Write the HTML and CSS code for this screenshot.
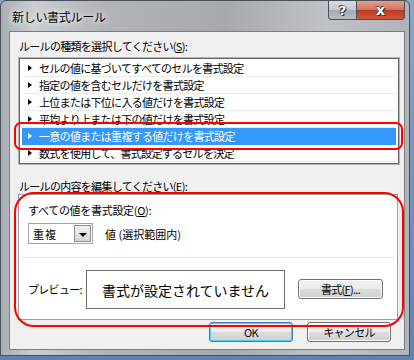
FILE: index.html
```html
<!DOCTYPE html>
<html lang="ja">
<head>
    <meta charset="UTF-8">
    <title>新しい書式ルール</title>
    <link rel="stylesheet" href="styles.css">
</head>
<body>
    <div class="window">
        <div class="titlebar">
            <span class="title">新しい書式ルール</span>
            <div class="caption-buttons">
                <div class="cap-btn help">?</div>
                <div class="cap-btn close">x</div>
            </div>
        </div>

        <div class="client">
            <div class="label">ルールの種類を選択してください(<u>S</u>):</div>
            <div class="listbox">
                <div class="row"><span class="tri"></span>セルの値に基づいてすべてのセルを書式設定</div>
                <div class="row"><span class="tri"></span>指定の値を含むセルだけを書式設定</div>
                <div class="row"><span class="tri"></span>上位または下位に入る値だけを書式設定</div>
                <div class="row"><span class="tri"></span>平均より上または下の値だけを書式設定</div>
                <div class="row selected"><span class="tri"></span>一意の値または重複する値だけを書式設定</div>
                <div class="row"><span class="tri"></span>数式を使用して、書式設定するセルを決定</div>
            </div>

            <div class="label second">ルールの内容を編集してください(<u>E</u>):</div>
            <div class="panel">
                <div class="panel-top">
                    <div class="sub-label">すべての値を書式設定(<u>O</u>):</div>
                    <div class="value-line">
                        <div class="combo">
                            <span class="combo-text">重複</span>
                            <span class="combo-arrow"><span class="down"></span></span>
                        </div>
                        <span class="value-text">値 (選択範囲内)</span>
                    </div>
                </div>
                <div class="preview-line">
                    <span class="preview-label">プレビュー:</span>
                    <div class="preview-box">書式が設定されていません</div>
                    <div class="btn format-btn">書式(<u>F</u>)...</div>
                </div>
            </div>

            <div class="footer">
                <div class="btn default">OK</div>
                <div class="btn">キャンセル</div>
            </div>
        </div>

        <!-- red annotation marks -->
        <div class="mark mark-row"></div>
        <div class="mark mark-panel"></div>
    </div>
</body>
</html>
```

FILE: styles.css
```css
body {
    margin: 0;
    padding: 0;
    background: linear-gradient(to bottom, #8aa6c8, #5e83b3);
    font-family: "Noto Sans CJK JP", "Noto Sans", sans-serif;
    font-size: 11px;
    letter-spacing: -0.7px;
    color: #000;
    width: 414px;
    height: 360px;
    overflow: hidden;
}
u {
    text-decoration: underline;
}
.window {
    position: relative;
    width: 410px;
    height: 356px;
    box-sizing: border-box;
    border: 1px solid #4a4f55;
    border-radius: 6px 6px 0 0;
    background: linear-gradient(to right, #a9aeb4 0%, #c9ccd0 8%, #b1b4b8 25%, #a6a9ad 55%, #bfc2c6 80%, #b0b4b9 100%);
    padding: 0 4px 5px 8px;
    display: flex;
    flex-direction: column;
}
.titlebar {
    height: 30px;
    display: flex;
    justify-content: space-between;
    align-items: flex-start;
    flex-shrink: 0;
}
.title {
    font-size: 12px;
    letter-spacing: -0.3px;
    margin-top: 7px;
    margin-left: 3px;
    color: #000;
    text-shadow: 0 0 8px #fff, 0 0 4px #fff;
}
.caption-buttons {
    display: flex;
}
.cap-btn {
    height: 19px;
    box-sizing: border-box;
    border: 1px solid #4b5058;
    border-top: none;
    display: flex;
    align-items: center;
    justify-content: center;
    font-family: "DejaVu Sans", sans-serif;
    font-weight: bold;
    letter-spacing: 0;
    color: #fff;
    text-shadow: 0 0 1px #222, 1px 1px 0 #333, -1px -1px 0 #555;
}
.help {
    width: 29px;
    border-radius: 0 0 0 4px;
    font-size: 13px;
    background: linear-gradient(to bottom, #d7dadf 0%, #c3c7cd 50%, #a5aab2 51%, #b9bec5 100%);
}
.close {
    width: 48px;
    border-left: none;
    border-radius: 0 0 4px 0;
    font-size: 14px;
    background: linear-gradient(to bottom, #e4a092 0%, #d0705c 50%, #bb3a20 51%, #d2553a 100%);
}
.client {
    flex: 1;
    background: #f0f0f0;
    border: 1px solid #7a7e83;
    display: flex;
    flex-direction: column;
    padding: 0 8px;
}
.label {
    height: 26px;
    line-height: 28px;
    padding-left: 1px;
}
.label.second {
    height: 30px;
    line-height: 44px;
}
.listbox {
    height: 102px;
    border: 1px solid #646464;
    box-shadow: 0 0 0 1px #b4b4b4;
    background: #fff;
    padding: 1px 2px;
    margin-left: 1px;
    width: 374px;
}
.row {
    height: 17px;
    line-height: 16px;
    border-bottom: 1px solid #ebebeb;
    box-sizing: border-box;
    display: flex;
    align-items: center;
    white-space: nowrap;
}
.row.selected {
    background: #3399ff;
    color: #fff;
    border-bottom-color: #3399ff;
}
.tri {
    width: 0;
    height: 0;
    border-top: 3px solid transparent;
    border-bottom: 3px solid transparent;
    border-left: 4px solid #000;
    margin: 0 7px 0 6px;
}
.selected .tri {
    border-left-color: #fff;
}
.panel {
    height: 126px;
    box-sizing: border-box;
    background: #fff;
    border: 1px solid #a0a0a0;
    width: 380px;
    display: flex;
    flex-direction: column;
    padding: 0 2px;
}
.panel-top {
    height: 62px;
    border-bottom: 1px solid #e3e3e3;
    padding-left: 7px;
}
.sub-label {
    margin-top: 7px;
    height: 16px;
    line-height: 16px;
    letter-spacing: -0.3px;
}
.value-line {
    display: flex;
    align-items: center;
    margin-top: 5px;
}
.combo {
    width: 65px;
    height: 21px;
    box-sizing: border-box;
    border: 1px solid #a5a5a5;
    display: flex;
    align-items: center;
    justify-content: space-between;
    padding: 1px;
}
.combo-text {
    padding-left: 3px;
    letter-spacing: 1px;
}
.combo-arrow {
    width: 17px;
    height: 17px;
    box-sizing: border-box;
    border: 1px solid #8e8f8f;
    background: linear-gradient(to bottom, #f2f2f2, #d5d5d5);
    display: flex;
    align-items: center;
    justify-content: center;
}
.down {
    width: 0;
    height: 0;
    border-left: 4px solid transparent;
    border-right: 4px solid transparent;
    border-top: 4px solid #000;
    margin-top: 2px;
}
.value-text {
    margin-left: 12px;
    letter-spacing: 0;
    white-space: pre;
}
.preview-line {
    flex: 1;
    display: flex;
    align-items: center;
    padding-left: 7px;
}
.preview-label {
    width: 58px;
    flex-shrink: 0;
    white-space: nowrap;
}
.preview-box {
    width: 199px;
    height: 39px;
    flex-shrink: 0;
    box-sizing: border-box;
    border: 1px solid #6d6d6d;
    display: flex;
    align-items: center;
    justify-content: center;
    font-size: 14px;
    letter-spacing: 0;
    margin-top: 2px;
}
.btn {
    width: 84px;
    height: 20px;
    flex-shrink: 0;
    box-sizing: border-box;
    border: 1px solid #707070;
    border-radius: 3px;
    background: linear-gradient(to bottom, #f2f2f2 0%, #ebebeb 50%, #dddddd 51%, #cfcfcf 100%);
    box-shadow: inset 0 0 0 1px #fcfcfc;
    display: flex;
    align-items: center;
    justify-content: center;
    line-height: 16px;
}
.format-btn {
    margin-left: 13px;
    width: 85px;
}
.footer {
    display: flex;
    justify-content: flex-end;
    gap: 14px;
    margin-top: 2px;
    padding-right: 5px;
}
.btn.default {
    border-color: #3c7fb1;
    box-shadow: inset 0 0 0 1px #48d0f5;
}
.mark {
    position: absolute;
    border: 2px solid #ff0000;
    box-sizing: border-box;
}
.mark-row {
    left: 13px;
    top: 121px;
    width: 389px;
    height: 28px;
    border-radius: 7px;
}
.mark-panel {
    left: 13px;
    top: 191px;
    width: 390px;
    height: 135px;
    border-radius: 20px;
}
```
